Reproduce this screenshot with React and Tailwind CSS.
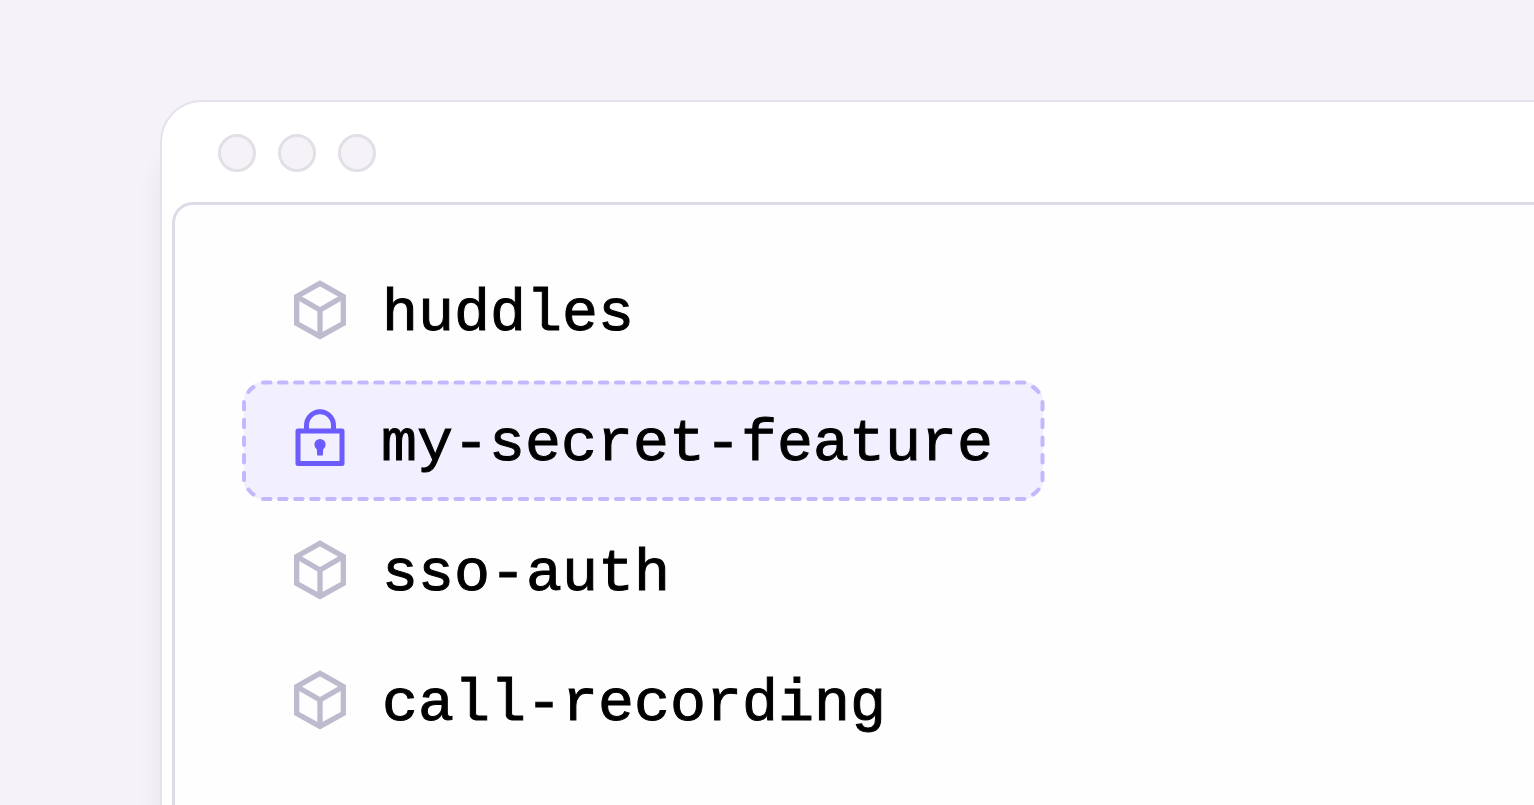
const flags = [
    { name: 'huddles' },
    { name: 'my-secret-feature', locked: true },
    { name: 'sso-auth' },
    { name: 'call-recording' },
];

const CubeIcon = () => (
    <svg className="w-[60px] h-[64px] mb-[2px] shrink-0" viewBox="0 0 60 64" fill="none" stroke="#bfbbce" strokeWidth="5.3">
        <path d="M30 5.4 53.3 18.5V45.5L30 58.4 6.7 45.5V18.5Z" />
        <path d="M6.7 18.5 30 32 53.3 18.5M30 32V58.4" />
    </svg>
);

const LockIcon = () => (
    <svg className="relative w-[60px] h-[64px] mb-[3px] shrink-0" viewBox="0 0 60 64" fill="none" stroke="#6c5cfe" strokeWidth="5">
        <rect x="8" y="24" width="44" height="32.5" strokeLinejoin="round" />
        <path d="M16.5 24V18.3A13.5 13.5 0 0 1 43.5 18.3V24" />
        <circle cx="30" cy="37.5" r="5.6" fill="#6c5cfe" stroke="none" />
        <path d="M26.8 41H33.2L32.8 48.5H27.2Z" fill="#6c5cfe" stroke="none" />
    </svg>
);

// Rounded dashes around the highlighted row
const DashedOutline = () => (
    <svg className="absolute -top-[2px] -left-[2px] w-[803px] h-[121px]" viewBox="0 0 803 121" fill="none" stroke="#c3b8fd" strokeWidth="4" strokeLinecap="round">
        <path d="M21 2.5H784M21 119H784" strokeDasharray="7.5 8.54" />
        <path d="M2 22V102M800.5 22V102" strokeDasharray="7.5 10.2" />
        <path d="M6.5 12 Q8.5 9 11.5 7M791 7Q794 9 796.5 12M6.5 109.5Q8.5 112.5 11.5 114.5M791 114.5Q794 112.5 796.5 109.5" />
    </svg>
);

const FlagRow = ({ name, locked }) => (
    <div className={`relative flex items-center w-[803px] h-[121px] pl-[46px] gap-[32px] rounded-[20px] border-2 border-transparent bg-clip-padding ${locked ? 'bg-[#f2effe]' : ''}`}>
        {locked && <DashedOutline />}
        {locked ? <LockIcon /> : <CubeIcon />}
        <span className={`relative pt-[7px] font-['Liberation_Mono',monospace] text-[60px] leading-[64px] text-black whitespace-pre [-webkit-text-stroke:1px_black] ${locked ? '-ml-[1px]' : ''}`}>
            {name}
        </span>
    </div>
);

const App = () => (
    <div className="w-full h-[805px] overflow-hidden bg-[#f5f3f8] pt-[100px] pl-[160px]">
        <div className="flex flex-col w-[1500px] h-[900px] rounded-tl-[42px] border-2 border-[#e5e2ec] bg-white shadow-[0_50px_26px_0_rgba(60,50,90,0.08)]">
            {/* Title bar */}
            <div className="flex gap-[22px] h-[100px] shrink-0 pt-[32px] pl-[56px]">
                <div className="size-[38px] rounded-full border-3 border-[#e2dfe7] bg-[#f5f3f8]" />
                <div className="size-[38px] rounded-full border-3 border-[#e2dfe7] bg-[#f5f3f8]" />
                <div className="size-[38px] rounded-full border-3 border-[#e2dfe7] bg-[#f5f3f8]" />
            </div>

            {/* Flag list */}
            <div className="flex flex-col flex-1 gap-[9px] ml-[10px] pt-[45px] pl-[67px] rounded-tl-[21px] border-t-3 border-l-3 border-[#dddbe6] bg-[#fefefe]">
                {flags.map((flag) => (
                    <FlagRow key={flag.name} {...flag} />
                ))}
            </div>
        </div>
    </div>
);

export default App;
